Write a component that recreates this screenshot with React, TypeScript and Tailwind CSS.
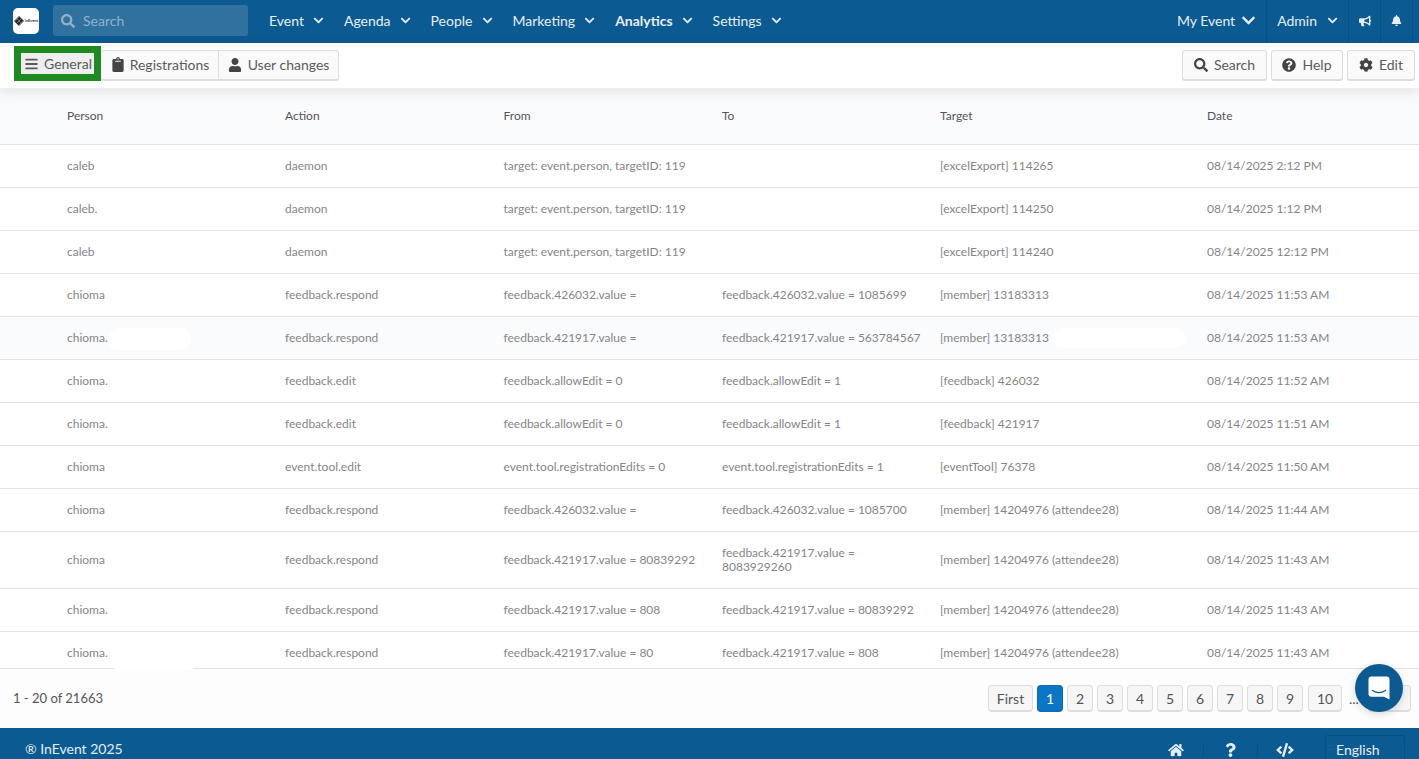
import type { ReactNode } from 'react';
import {
  FaBars,
  FaBell,
  FaBullhorn,
  FaChevronDown,
  FaClipboard,
  FaCode,
  FaCog,
  FaHome,
  FaQuestion,
  FaQuestionCircle,
  FaSearch,
  FaUser,
} from 'react-icons/fa';

const columns = 'grid grid-cols-[218px_218.5px_218.5px_218px_267px_1fr] pl-[67px] items-center';

const rows = [
  ['caleb', 'daemon', 'target: event.person, targetID: 119', '', '[excelExport] 114265', '08/14/2025 2:12 PM'],
  ['caleb.', 'daemon', 'target: event.person, targetID: 119', '', '[excelExport] 114250', '08/14/2025 1:12 PM'],
  ['caleb', 'daemon', 'target: event.person, targetID: 119', '', '[excelExport] 114240', '08/14/2025 12:12 PM'],
  ['chioma', 'feedback.respond', 'feedback.426032.value =', 'feedback.426032.value = 1085699', '[member] 13183313', '08/14/2025 11:53 AM'],
  ['chioma.', 'feedback.respond', 'feedback.421917.value =', 'feedback.421917.value = 563784567', '[member] 13183313', '08/14/2025 11:53 AM'],
  ['chioma.', 'feedback.edit', 'feedback.allowEdit = 0', 'feedback.allowEdit = 1', '[feedback] 426032', '08/14/2025 11:52 AM'],
  ['chioma.', 'feedback.edit', 'feedback.allowEdit = 0', 'feedback.allowEdit = 1', '[feedback] 421917', '08/14/2025 11:51 AM'],
  ['chioma', 'event.tool.edit', 'event.tool.registrationEdits = 0', 'event.tool.registrationEdits = 1', '[eventTool] 76378', '08/14/2025 11:50 AM'],
  ['chioma', 'feedback.respond', 'feedback.426032.value =', 'feedback.426032.value = 1085700', '[member] 14204976 (attendee28)', '08/14/2025 11:44 AM'],
  ['chioma', 'feedback.respond', 'feedback.421917.value = 80839292', 'feedback.421917.value = 8083929260', '[member] 14204976 (attendee28)', '08/14/2025 11:43 AM'],
  ['chioma.', 'feedback.respond', 'feedback.421917.value = 808', 'feedback.421917.value = 80839292', '[member] 14204976 (attendee28)', '08/14/2025 11:43 AM'],
  ['chioma.', 'feedback.respond', 'feedback.421917.value = 80', 'feedback.421917.value = 808', '[member] 14204976 (attendee28)', '08/14/2025 11:43 AM'],
];

function NavItem({ label, bold }: { label: string; bold?: boolean }) {
  return (
    <div className={`flex items-center gap-[9px] text-[14px] text-[#e6eef5] ${bold ? 'font-bold' : ''}`}>
      {label}
      <FaChevronDown className="size-[11px]" />
    </div>
  );
}

function ToolButton({ icon, label, className }: { icon: ReactNode; label: string; className: string }) {
  return (
    <div className={`flex h-[31px] items-center justify-center gap-[6px] rounded-[3px] border border-[#ddd] border-b-2 bg-[#fafafa] pb-[1px] text-[14px] text-[#5a5a5a] ${className}`}>
      {icon}
      {label}
    </div>
  );
}

function PageButton({ label, active, className }: { label: string; active?: boolean; className: string }) {
  return (
    <div
      className={`flex h-[27px] items-center justify-center rounded-[4px] border border-b-2 text-[14px] ${
        active ? 'border-[#0a6cb5] bg-[#0b76c6] text-white' : 'border-[#ddd] bg-[#f6f6f6] text-[#555]'
      } ${className}`}
    >
      {label}
    </div>
  );
}

function Logo() {
  return (
    <div className="flex h-[26px] w-[26px] items-center justify-center gap-[1px] rounded-[5px] bg-white">
      <svg width="10" height="10" viewBox="0 0 10 10">
        <path d="M5 0 10 5 5 10 0 5Z" fill="#2a2a2a" />
        <path d="M1 5 5 1M3 7 7 3M5 9 9 5M3 3 7 7" stroke="#9aa" strokeWidth="0.6" />
      </svg>
      <span className="text-[4px] leading-none font-bold text-[#333]">InEvent</span>
    </div>
  );
}

export default function App() {
  return (
    <div className="relative flex h-[759px] w-full flex-col overflow-hidden bg-white font-['Lato','Open_Sans',sans-serif]">
      {/* Top nav */}
      <header className="flex h-[43px] shrink-0 items-center bg-[#0c5a92] pb-[2px] pl-[13px]">
        <Logo />
        <div className="ml-[14px] flex h-[31px] w-[195px] items-center gap-[8px] rounded-[3px] bg-[#31719f] pl-[8px] text-[14px] text-[#8fb3cd]">
          <FaSearch className="h-[14px] w-[14px]" />
          Search
        </div>
        <nav className="ml-[21px] flex items-center gap-[20px]">
          <NavItem label="Event" />
          <NavItem label="Agenda" />
          <NavItem label="People" />
          <NavItem label="Marketing" />
          <NavItem label="Analytics" bold />
          <NavItem label="Settings" />
        </nav>
        <div className="-mb-[2px] ml-auto flex h-[43px] items-center">
          <div className="flex items-center gap-[6px] pr-[10px] pb-[2px] text-[14px] text-[#e6eef5]">
            My Event
            <FaChevronDown className="size-[15px]" />
          </div>
          <div className="flex h-full items-center gap-[10px] border-l border-[#0a4f81] px-[10px] pb-[2px] text-[14px] text-[#e6eef5]">
            Admin
            <FaChevronDown className="size-[11px]" />
          </div>
          <div className="flex h-full w-[32px] items-center justify-center border-l border-[#0a4f81] pb-[2px] text-[#e6eef5]">
            <FaBullhorn className="h-[12px] w-[12px]" />
          </div>
          <div className="flex h-full w-[33px] items-center justify-center border-x border-[#0a4f81] pb-[2px] text-[#e6eef5]">
            <FaBell className="h-[11px] w-[11px]" />
          </div>
          <div className="w-[6px]" />
        </div>
      </header>

      {/* Toolbar */}
      <div className="relative z-10 flex h-[45px] shrink-0 items-start bg-white pr-[4px] pl-[14px] shadow-[0_4px_12px_rgba(0,0,0,0.1)]">
        <div className="mt-[3px] flex h-[35px] w-[87px] items-center justify-center bg-[#1f8a22]">
          <div className="flex h-[21px] w-[73px] items-center justify-center gap-[6px] bg-[#eee] pl-[2px] text-[14px] text-[#5a5a5a]">
            <FaBars className="h-[14px] w-[13px]" />
            General
          </div>
        </div>
        <div className="mt-[7px] flex">
          <ToolButton className="w-[118px] rounded-r-none border-l-0 pl-[2px]" icon={<FaClipboard className="h-[15px] w-[12px] text-[#444]" />} label="Registrations" />
          <ToolButton className="w-[120px] rounded-l-none border-l-0" icon={<FaUser className="h-[14px] w-[14px] text-[#444]" />} label="User changes" />
        </div>
        <div className="mt-[7px] ml-auto flex gap-[4px]">
          <ToolButton className="w-[85px]" icon={<FaSearch className="h-[14px] w-[14px] text-[#444]" />} label="Search" />
          <ToolButton className="w-[72px]" icon={<FaQuestionCircle className="h-[14px] w-[14px] text-[#444]" />} label="Help" />
          <ToolButton className="w-[68px]" icon={<FaCog className="h-[14px] w-[14px] text-[#444]" />} label="Edit" />
        </div>
      </div>

      {/* Table */}
      <div className="relative min-h-0 flex-1 overflow-hidden pt-[0.5px] text-[12px]">
        <div className={`${columns} h-[56.5px] border-b border-[#e3e3e3] bg-[#fafbfd] text-[#555]`}>
          {['Person', 'Action', 'From', 'To', 'Target', 'Date'].map((h) => (
            <div key={h}>{h}</div>
          ))}
        </div>
        {rows.map((row, i) => (
          <div
            key={i}
            className={`${columns} border-b border-[#e3e3e3] text-[#858585] ${i === 9 ? 'h-[57px]' : 'h-[43px]'} ${i === 4 ? 'bg-[#fafbfd]' : 'bg-white'}`}
          >
            {row.map((cell, j) => (
              <div key={j} className={j === 3 ? 'pr-[18px] leading-[14px]' : ''}>
                {cell}
              </div>
            ))}
          </div>
        ))}
      </div>

      {/* Pagination */}
      <div className="flex h-[60px] shrink-0 items-center border-t border-[#e3e3e3] bg-[#fdfdfd] pr-[8px] pl-[13px] text-[13px] text-[#555]">
        1 - 20 of 21663
        <div className="ml-auto flex items-center">
          <PageButton label="First" className="w-[45px]" />
          <PageButton label="1" active className="ml-[4px] w-[26px]" />
          {['2', '3', '4', '5', '6', '7', '8', '9'].map((p) => (
            <PageButton key={p} label={p} className="ml-[4px] w-[26px]" />
          ))}
          <PageButton label="10" className="ml-[5px] w-[34px]" />
          <span className="ml-[7px] w-[19px] text-[14px]">...</span>
          <PageButton label="»" className="w-[43px]" />
        </div>
      </div>

      {/* Footer */}
      <footer className="flex h-[31px] shrink-0 bg-[#0c5a92] pl-[25px] text-[14px] text-[#e6eef5]">
        <span className="mt-[10px]">® InEvent 2025</span>
        <div className="ml-auto flex items-start">
          <div className="mt-[15px] flex w-[54px] justify-center">
            <FaHome className="h-[14px] w-[16px]" />
          </div>
          <div className="mt-[15px] flex w-[54px] justify-center border-l border-[#0a4f81]">
            <FaQuestion className="h-[14px] w-[11px]" />
          </div>
          <div className="mt-[15px] flex w-[54px] justify-center border-l border-[#0a4f81]">
            <FaCode className="h-[14px] w-[18px]" />
          </div>
          <div className="mt-[7px] ml-[14px] mr-[14px] flex h-[24px] w-[80px] items-center rounded-t-[3px] border border-b-0 border-[#0a4f81] pt-[4px] pl-[10px]">
            English
          </div>
        </div>
      </footer>

      {/* redacted patches */}
      <div className="absolute top-[328px] left-[108px] h-[22px] w-[83px] rounded-[10px] bg-white" />
      <div className="absolute top-[328px] left-[1052px] h-[20px] w-[133px] rounded-[10px] bg-white" />
      <div className="absolute top-[647px] left-[112px] h-[23px] w-[83px] rounded-[6px] bg-white" />

      {/* Chat bubble */}
      <div className="absolute top-[664px] left-[1355px] z-20 flex h-[48px] w-[48px] items-center justify-center rounded-full bg-[#0c5a92] shadow-[0_2px_8px_rgba(0,0,0,0.15)]">
        <svg width="22" height="24" viewBox="0 0 22 24" fill="none">
          <path d="M3.5 0.5h15a3 3 0 0 1 3 3v20l-5.5-2.8H3.5a3 3 0 0 1-3-3V3.500a3 3 0 0 1 3-3Z" fill="#fff" />
          <path d="M4.500 14.500c4 2.600 9 2.600 13 0" stroke="#0c5a92" strokeWidth="1.4" strokeLinecap="round" />
        </svg>
      </div>
    </div>
  );
}
